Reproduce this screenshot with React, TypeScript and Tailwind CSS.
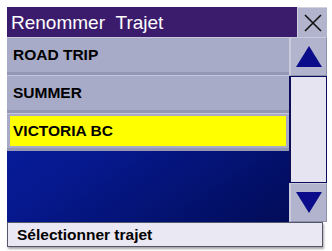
const trips = [
  { name: "ROAD TRIP", selected: false },
  { name: "SUMMER", selected: false },
  { name: "VICTORIA BC", selected: true },
];

function Triangle({ up }: { up: boolean }) {
  return (
    <svg width="28" height="23" viewBox="0 0 28 23">
      <polygon points={up ? "14,1 27,22 1,22" : "1,1 27,1 14,22"} fill="#0a0c8a" />
    </svg>
  );
}

export default function App() {
  return (
    <div
      className="h-[251px] w-[332px] bg-white pl-[7px] pt-[7px]"
      style={{ fontFamily: '"Liberation Sans", Arial, sans-serif' }}
    >
      <div className="flex w-[320px] flex-col">
        {/* title */}
        <div className="flex h-[30px]">
          <div className="flex w-[290px] items-center bg-[#3b1c6c] pl-[4px] text-[19px] leading-none text-white">
            Renommer&nbsp;&nbsp;Trajet
          </div>
          <button
            type="button"
            className="flex w-[30px] items-center justify-center border-l border-t border-[#d0d2e2] bg-[#b1b4cc]"
          >
            <svg width="20" height="20" viewBox="0 0 20 20">
              <path d="M2 2 L18 18 M18 2 L2 18" stroke="#111" strokeWidth="1.6" />
            </svg>
          </button>
        </div>

        {/* body */}
        <div className="flex h-[185px]">
          <div className="flex w-[282px] flex-col bg-gradient-to-br from-[#0a22b0] via-[#06188c] to-[#020c58]">
            {trips.map((t) => (
              <div
                key={t.name}
                className="h-[38px] border-b-[3px] border-b-[#9397b3] border-t border-t-[#c4c7db] bg-[#a8abc7] px-[3px] py-[2px]"
              >
                <div
                  className={`flex h-full items-center pl-[3px] text-[15.5px] font-bold text-black ${
                    t.selected ? "bg-[#ffff00]" : ""
                  }`}
                >
                  {t.name}
                </div>
              </div>
            ))}
          </div>
          <div className="flex w-[38px] flex-col bg-[#0a0c5a]">
            <div className="flex h-[39px] items-center justify-center border-l-2 border-t border-[#c9cbdd] border-r border-r-[#8e91ab] border-b border-b-[#8e91ab] bg-[#b1b4cc]">
              <Triangle up />
            </div>
            <div className="ml-[1px] flex-1 border border-[#0a0c5a] bg-[#e6e4f0]" />
            <div className="flex h-[39px] items-center justify-center border-l-2 border-t border-[#c9cbdd] border-r border-r-[#8e91ab] border-b border-b-[#8e91ab] bg-[#b1b4cc]">
              <Triangle up={false} />
            </div>
          </div>
        </div>

        {/* footer */}
        <div className="flex h-[25px] w-[316px] items-center border border-[#55576a] bg-[#eae8f2] pl-[9px] text-[15.5px] font-bold text-black shadow-[1px_2px_2px_rgba(0,0,0,0.35)]">
          Sélectionner trajet
        </div>
      </div>
    </div>
  );
}
